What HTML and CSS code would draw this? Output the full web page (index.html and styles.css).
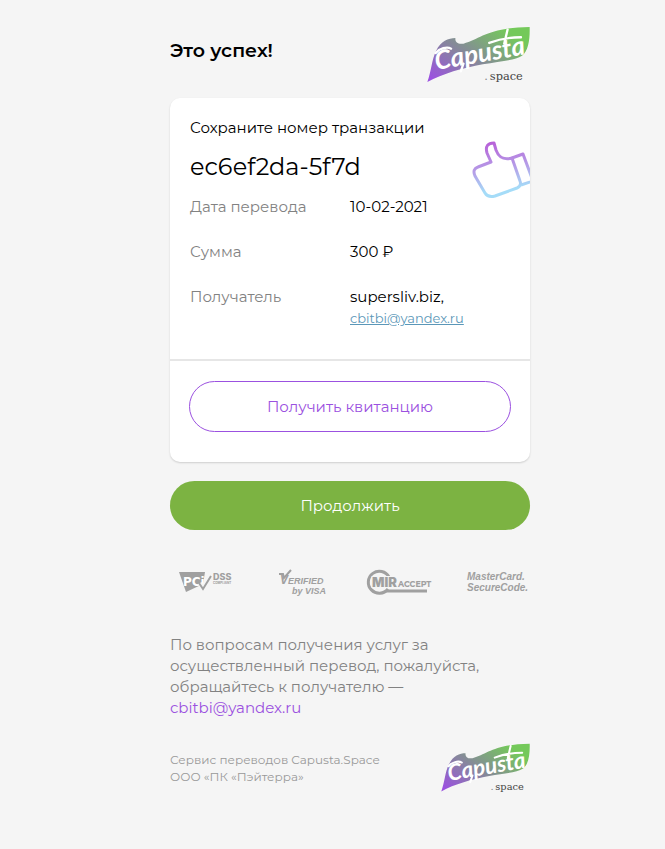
FILE: index.html
```html
<!DOCTYPE html>
<html lang="ru">
<head>
<meta charset="utf-8">
<meta name="viewport" content="width=device-width, initial-scale=1">
<title>Это успех!</title>
<link rel="stylesheet" href="styles.css">
</head>
<body>
<svg width="0" height="0" class="defs" aria-hidden="true">
  <defs>
    <linearGradient id="leaf" x1="0" y1="1" x2="1" y2="0.25">
      <stop offset="0.05" stop-color="#9b51e0"/>
      <stop offset="0.5" stop-color="#858a98"/>
      <stop offset="0.95" stop-color="#74c95a"/>
    </linearGradient>
    <symbol id="capusta" viewBox="23 18 308 172">
      <path fill="url(#leaf)" d="M24 185C36 152 37 118 50 92C64 62 87 53 108 53C106 66 116 73 132 70C185 55 205 22 330 20C331 58 326 92 307 106C285 121 240 122 190 132C130 143 70 160 24 185Z"/>
      <path class="logo-line" d="M49 98C60 84 83 78 95 85M209 68Q255 51 304 51M264 28L254 70M132 130L124 153"/>
      <text class="logo-name" transform="translate(51 149) rotate(-10)">Capusta</text>
      <text class="logo-dot" x="194" y="179">.</text>
      <text class="logo-space" x="211" y="179">space</text>
    </symbol>
  </defs>
</svg>
<main class="page">
  <header class="header">
    <h1 class="title">Это успех!</h1>
    <svg class="logo" role="img" aria-label="Capusta.space"><use href="#capusta"/></svg>
  </header>

  <section class="card">
    <div class="details">
      <p class="hint">Сохраните номер транзакции</p>
      <p class="number">ec6ef2da-5f7d</p>
      <svg class="thumb" viewBox="0 0 59 60" aria-hidden="true">
        <defs>
          <linearGradient id="thumb" gradientUnits="userSpaceOnUse" x1="22" y1="0" x2="30" y2="58">
            <stop offset="0" stop-color="#b85fd8"/>
            <stop offset="0.5" stop-color="#b5a0e8"/>
            <stop offset="0.85" stop-color="#a5dcf8"/>
          </linearGradient>
        </defs>
        <path d="M20 21L16 12C14 5 17 2 23 2L25 9C28 17 33 19 41 17L49 40Q51 45 46 47L24 55Q17 57 14 52L4 35Q1 28 7 26Z"/>
        <path d="M41 17L52 13L62 40L50 44"/>
      </svg>
      <dl class="facts">
        <dt>Дата перевода</dt><dd>10-02-2021</dd>
        <dt>Сумма</dt><dd>300 ₽</dd>
        <dt>Получатель</dt>
        <dd>supersliv.biz,<a class="mail" href="mailto:cbitbi@yandex.ru">cbitbi@yandex.ru</a></dd>
      </dl>
    </div>
    <div class="receipt"><button class="button outline" type="button">Получить квитанцию</button></div>
  </section>

  <button class="button primary" type="button">Продолжить</button>

  <div class="badges">
    <svg viewBox="0 0 64 28" role="img" aria-label="PCI DSS Compliant">
      <path d="M5 3H31L29 15L12 23Z"/>
      <text class="pci" x="9" y="17">PCi</text>
      <path class="check-gap" d="M26 14L29 19L36 8"/>
      <path class="check" d="M25 14L29 20L37 7"/>
      <text class="dss" x="39" y="11">DSS</text>
      <text class="tiny" x="39" y="15">COMPLIANT</text>
    </svg>
    <svg viewBox="0 0 64 28" role="img" aria-label="Verified by Visa">
      <path class="tick" d="M9 5L13 5L14 9L21 1"/>
      <text class="verified" x="10" y="15"><tspan class="initial">V</tspan>ERIFIED</text>
      <text class="verified" x="22" y="25">by VISA</text>
    </svg>
    <svg viewBox="0 0 64 28" role="img" aria-label="MirAccept">
      <path class="ring" d="M23 8A11 11 0 1 0 22 20"/>
      <path class="ring" d="M20 22H61"/>
      <text class="mir" x="6" y="18">MIR</text>
      <text class="accept" x="32" y="18">ACCEPT</text>
    </svg>
    <svg viewBox="0 0 64 28" role="img" aria-label="MasterCard SecureCode">
      <text class="master" x="5" y="11">MasterCard.</text>
      <text class="master" x="5" y="22">SecureCode.</text>
    </svg>
  </div>

  <p class="contact">По вопросам получения услуг за осуществленный перевод, пожалуйста, обращайтесь к получателю — <a href="mailto:cbitbi@yandex.ru">cbitbi@yandex.ru</a></p>

  <footer class="footer">
    <p>Сервис переводов Capusta.Space<br>ООО «ПК «Пэйтерра»</p>
    <svg class="logo small" role="img" aria-label="Capusta.space"><use href="#capusta"/></svg>
  </footer>
</main>
</body>
</html>
```
FILE: styles.css
```css
* { box-sizing: border-box; }
body {
  margin: 0;
  padding: 26px 0 40px 35px;
  background: #f5f5f5;
  color: #000;
  font: 400 15px/20px Montserrat, Inter, sans-serif;
}
.defs { position: absolute; }
h1, p, dl, dd { margin: 0; }
.page { max-width: 360px; margin: 0 auto; }
.header { display: flex; justify-content: space-between; align-items: flex-start; }
.title { padding-top: 13px; font-size: 19px; line-height: 24px; font-weight: 600; }
.logo { width: 103px; height: 58px; flex: none; }
.logo.small { width: 89px; height: 50px; }
.logo-line { fill: none; stroke: #fff; stroke-width: 7; stroke-linecap: round; }
.logo-name { font: italic 700 78px Lato, sans-serif; fill: #fff; }
.logo-dot { font: 34px "DejaVu Serif", serif; fill: #888; }
.logo-space { font: 34px "DejaVu Serif", serif; fill: #444; }

.card {
  margin-top: 14px;
  background: #fff;
  border-radius: 10px;
  box-shadow: 0 1px 2px rgba(0, 0, 0, 0.16);
}
.details {
  position: relative;
  padding: 20px 20px 31px;
  border-bottom: 2px solid #e6e6e6;
}
.number { margin-top: 15px; font-size: 24px; line-height: 28px; }
.thumb {
  position: absolute;
  top: 43px;
  right: 0;
  width: 59px;
  height: 60px;
  fill: none;
  stroke: url(#thumb);
  stroke-width: 3;
  stroke-linejoin: round;
}
.facts {
  display: grid;
  grid-template-columns: 1fr 1fr;
  gap: 25px 0;
  margin-top: 16px;
}
.facts dt { color: #828282; }
.mail { display: block; width: max-content; margin-top: 2px; font-size: 13px; line-height: 19px; color: #5b97b8; }
.receipt { padding: 20px 19px 30px; }
.button {
  display: block;
  width: 100%;
  border-radius: 26px;
  font: inherit;
  cursor: pointer;
}
.outline { height: 51px; border: 1px solid #9b51e0; background: #fff; color: #9b51e0; }
.primary { height: 49px; margin-top: 19px; border: 0; background: #7cb342; color: #fff; }

.badges { display: flex; justify-content: space-between; margin-top: 39px; padding: 0 4px; }
.badges svg { width: 64px; height: 28px; fill: #a0a0a0; overflow: visible; }
.check, .tick { fill: none; stroke: #a0a0a0; stroke-width: 2; }
.check-gap { fill: none; stroke: #f5f5f5; stroke-width: 4; }
.ring { fill: none; stroke: #a0a0a0; stroke-width: 3; }
.pci { font: 700 12px "DejaVu Sans", sans-serif; fill: #fff; }
.dss { font: 800 9px Inter, sans-serif; }
.tiny { font: 700 3px Inter, sans-serif; }
.verified { font: italic 700 9px "Liberation Sans", sans-serif; }
.initial { font-size: 12px; }
.mir { font: 900 13px Inter, sans-serif; stroke: #f5f5f5; stroke-width: 2; paint-order: stroke; }
.accept { font: 700 8px Montserrat, sans-serif; }
.master { font: italic 700 10px "Liberation Sans", sans-serif; }

.contact { margin-top: 37px; line-height: 21px; color: #828282; }
.contact a { display: block; color: #9b51e0; text-decoration: none; }
.footer { display: flex; justify-content: space-between; align-items: center; margin-top: 25px; font-size: 12px; line-height: 17px; color: #999; }
```
